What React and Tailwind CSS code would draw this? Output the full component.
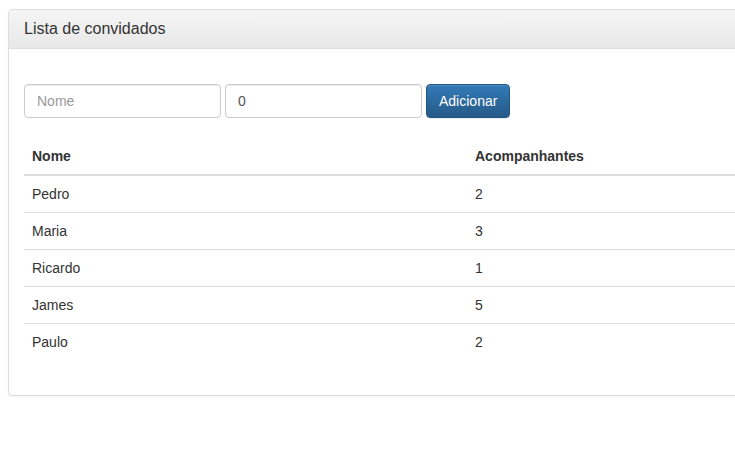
import React from 'react'

const guests = [
  { nome: 'Pedro', acomp: 2 },
  { nome: 'Maria', acomp: 3 },
  { nome: 'Ricardo', acomp: 1 },
  { nome: 'James', acomp: 5 },
  { nome: 'Paulo', acomp: 2 },
]

const App = () => {
  return (
    <div
      className="w-[735px] h-[469px] overflow-hidden bg-white text-[14px] leading-[20px] text-[#333]"
      style={{ fontFamily: '"Liberation Sans", Arial, sans-serif' }}
    >
      <div className="ml-[8px] mt-[9px] w-[780px] bg-white border border-[#ddd] rounded-[4px] shadow-[0_1px_2px_rgba(0,0,0,0.05)]">
        {/* Header */}
        <div className="h-[39px] px-[15px] flex items-center bg-gradient-to-b from-[#f5f5f5] to-[#e8e8e8] border-b border-[#ddd] rounded-t-[3px]">
          <h3 className="text-[16px] leading-[18px] text-[#333]">Lista de convidados</h3>
        </div>

        {/* Body */}
        <div className="px-[15px] pt-[35px] pb-[15px]">
          <div className="flex gap-[4px]">
            <input
              placeholder="Nome"
              className="w-[197px] h-[34px] px-[12px] border border-[#ccc] rounded-[4px] shadow-[inset_0_1px_1px_rgba(0,0,0,0.075)] placeholder:text-[#999] text-[#555] outline-none"
            />
            <input
              defaultValue="0"
              className="w-[197px] h-[34px] px-[12px] border border-[#ccc] rounded-[4px] shadow-[inset_0_1px_1px_rgba(0,0,0,0.075)] text-[#555] outline-none"
            />
            <button className="h-[34px] px-[12px] text-white border border-[#245580] rounded-[4px] bg-gradient-to-b from-[#337ab7] to-[#265a88] shadow-[inset_0_1px_0_rgba(255,255,255,0.15),0_1px_1px_rgba(0,0,0,0.075)]">
              Adicionar
            </button>
          </div>

          <table className="mt-[20px] mb-[20px] w-[750px] border-collapse table-fixed">
            <thead>
              <tr className="border-b-2 border-[#ddd]">
                <th className="w-[443px] p-[8px] text-left font-bold">Nome</th>
                <th className="p-[8px] text-left font-bold">Acompanhantes</th>
              </tr>
            </thead>
            <tbody>
              {guests.map((g, i) => (
                <tr key={g.nome} className={i > 0 ? 'border-t border-[#ddd]' : ''}>
                  <td className="p-[8px]">{g.nome}</td>
                  <td className="p-[8px]">{g.acomp}</td>
                </tr>
              ))}
            </tbody>
          </table>
        </div>
      </div>
    </div>
  )
}

export default App
